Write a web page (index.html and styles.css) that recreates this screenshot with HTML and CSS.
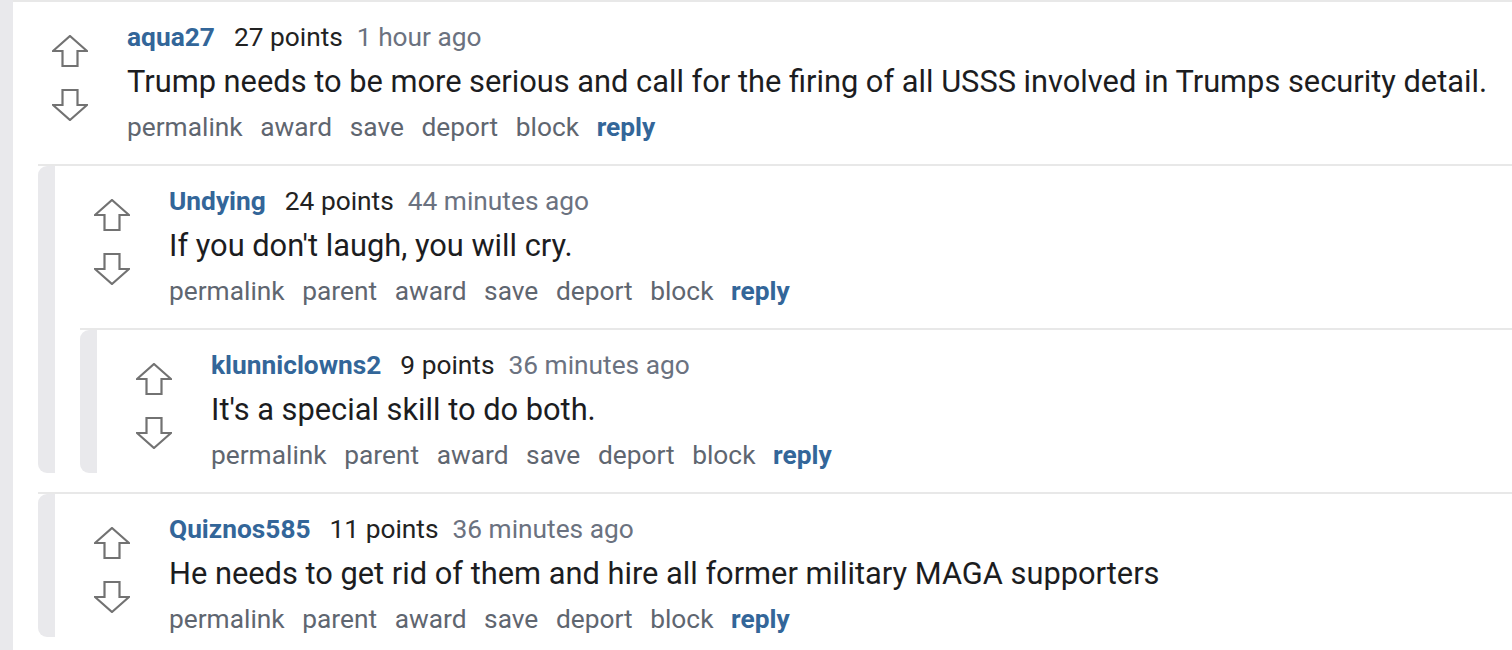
FILE: index.html
```html
<!DOCTYPE html>
<html>
<head>
<meta charset="utf-8">
<link rel="stylesheet" href="styles.css">
</head>
<body>
<div class="sitetable">
  <div class="comment">
    <div class="comment-box root">
      <div class="entry-row">
        <div class="vote">
          <svg class="arrow" viewBox="0 0 36 32"><path d="M18 1 L35 16 L25.5 16 L25.5 31 L10.5 31 L10.5 16 L1 16 Z"/></svg>
          <svg class="arrow" viewBox="0 0 36 32"><path d="M18 31 L35 16 L25.5 16 L25.5 1 L10.5 1 L10.5 16 L1 16 Z"/></svg>
        </div>
        <div class="entry">
          <div class="tagline"><a class="author">aqua27</a><span class="score">27 points</span><span class="time">1 hour ago</span></div>
          <div class="body">Trump needs to be more serious and call for the firing of all USSS involved in Trumps security detail.</div>
          <ul class="buttons"><li>permalink</li><li>award</li><li>save</li><li>deport</li><li>block</li><li class="reply">reply</li></ul>
        </div>
      </div>
      <div class="children">
        <div class="comment nested">
          <div class="comment-box">
            <div class="entry-row">
              <div class="vote">
                <svg class="arrow" viewBox="0 0 36 32"><path d="M18 1 L35 16 L25.5 16 L25.5 31 L10.5 31 L10.5 16 L1 16 Z"/></svg>
                <svg class="arrow" viewBox="0 0 36 32"><path d="M18 31 L35 16 L25.5 16 L25.5 1 L10.5 1 L10.5 16 L1 16 Z"/></svg>
              </div>
              <div class="entry">
                <div class="tagline"><a class="author">Undying</a><span class="score">24 points</span><span class="time">44 minutes ago</span></div>
                <div class="body">If you don't laugh, you will cry.</div>
                <ul class="buttons"><li>permalink</li><li>parent</li><li>award</li><li>save</li><li>deport</li><li>block</li><li class="reply">reply</li></ul>
              </div>
            </div>
            <div class="children">
              <div class="comment nested">
                <div class="comment-box">
                  <div class="entry-row">
                    <div class="vote">
                      <svg class="arrow" viewBox="0 0 36 32"><path d="M18 1 L35 16 L25.5 16 L25.5 31 L10.5 31 L10.5 16 L1 16 Z"/></svg>
                      <svg class="arrow" viewBox="0 0 36 32"><path d="M18 31 L35 16 L25.5 16 L25.5 1 L10.5 1 L10.5 16 L1 16 Z"/></svg>
                    </div>
                    <div class="entry">
                      <div class="tagline"><a class="author">klunniclowns2</a><span class="score">9 points</span><span class="time">36 minutes ago</span></div>
                      <div class="body">It's a special skill to do both.</div>
                      <ul class="buttons"><li>permalink</li><li>parent</li><li>award</li><li>save</li><li>deport</li><li>block</li><li class="reply">reply</li></ul>
                    </div>
                  </div>
                </div>
              </div>
            </div>
          </div>
        </div>
        <div class="comment nested">
          <div class="comment-box">
            <div class="entry-row">
              <div class="vote">
                <svg class="arrow" viewBox="0 0 36 32"><path d="M18 1 L35 16 L25.5 16 L25.5 31 L10.5 31 L10.5 16 L1 16 Z"/></svg>
                <svg class="arrow" viewBox="0 0 36 32"><path d="M18 31 L35 16 L25.5 16 L25.5 1 L10.5 1 L10.5 16 L1 16 Z"/></svg>
              </div>
              <div class="entry">
                <div class="tagline"><a class="author">Quiznos585</a><span class="score">11 points</span><span class="time">36 minutes ago</span></div>
                <div class="body">He needs to get rid of them and hire all former military MAGA supporters</div>
                <ul class="buttons"><li>permalink</li><li>parent</li><li>award</li><li>save</li><li>deport</li><li>block</li><li class="reply">reply</li></ul>
              </div>
            </div>
          </div>
        </div>
      </div>
    </div>
  </div>
</div>
</body>
</html>
```
FILE: styles.css
```css
html, body {
  margin: 0;
  padding: 0;
  background: #ffffff;
  font-family: Roboto, "Liberation Sans", Arial, sans-serif;
  color: #1c1d1f;
}

.sitetable {
  border-left: 13px solid #e9e9ec;
  min-height: 650px;
  box-sizing: border-box;
  overflow: hidden;
}

.comment {
  border-top: 2px solid #e8e8e8;
}

.comment.nested {
  margin-top: 19px;
}

.comment-box {
  display: flex;
  flex-direction: column;
}

.comment.nested > .comment-box {
  border-left: 17px solid #e9e9ec;
  border-radius: 9px 0 0 9px;
}

.entry-row {
  display: flex;
  align-items: flex-start;
}

.vote {
  width: 114px;
  flex: 0 0 114px;
  display: flex;
  flex-direction: column;
  align-items: center;
  padding-top: 33px;
  gap: 22px;
}

.arrow {
  width: 36px;
  height: 32px;
  display: block;
}

.arrow path {
  fill: none;
  stroke: #727272;
  stroke-width: 2.2;
  stroke-linejoin: miter;
}

.entry {
  padding-top: 17px;
  white-space: nowrap;
}

.tagline {
  font-size: 26.3px;
  line-height: 36px;
  display: flex;
  gap: 19px;
}

.author {
  color: #336699;
  font-weight: 700;
}

.score {
  color: #222222;
}

.time {
  color: #6b7280;
  margin-left: -5px;
}

.body {
  font-size: 30.8px;
  line-height: 36px;
  margin: 9px 0;
  color: #1c1d1f;
}

.buttons {
  list-style: none;
  margin: 0;
  padding: 0;
  display: flex;
  gap: 17.6px;
  font-size: 26.3px;
  line-height: 36px;
  color: #5f6670;
}

.buttons .reply {
  color: #336699;
  font-weight: 700;
}

.children {
  padding-left: 25px;
}
```
